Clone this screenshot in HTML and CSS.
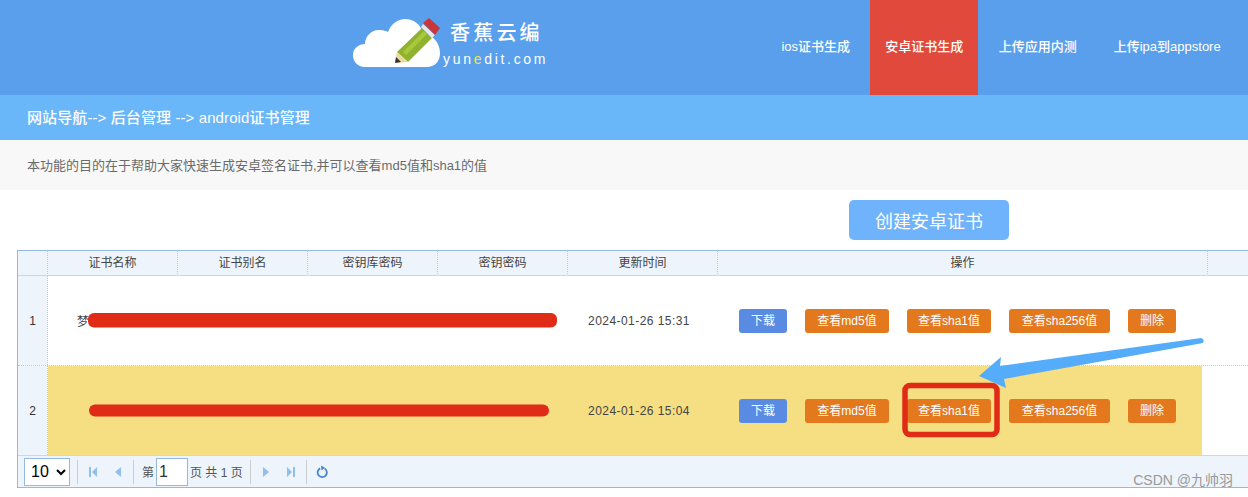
FILE: index.html
```html
<!DOCTYPE html>
<html lang="zh">
<head>
<meta charset="utf-8">
<title>android证书管理</title>
<link rel="stylesheet" href="styles.css">
</head>
<body>
<header class="topbar">
  <div class="logo">
    <svg class="logo-mark" width="104" height="50" viewBox="0 0 104 50">
      <path d="M12 50C4 50 0 44 0 38C0 31 6 27 12 27C12 18 20 12 27 13C31 13 33 14 35 15C38 7 45 2 52 2C61 2 68 8 70 16C80 18 87 26 87 36C87 45 81 50 74 50Z" fill="#fff"/>
      <path d="M44 35L69 11L79 21L55 45Z" fill="#8fb32f"/>
      <path d="M50 35L71 14L74 17L53 38Z" fill="#a9c83e"/>
      <path d="M42 46L44 35L55 45Z" fill="#ecd9a0"/>
      <path d="M42 46L43 40L48 45Z" fill="#333"/>
      <path d="M68 10L70 7L82 18L79 21Z" fill="#e8e8e8"/>
      <path d="M70 6L76 1L87 11L82 18Z" fill="#c9373a"/>
    </svg>
    <div class="logo-text">
      <span class="logo-cn">香蕉云编</span>
      <span class="logo-en">yun<b class="logo-e">e</b>dit.com</span>
    </div>
  </div>
  <nav class="nav">
    <a class="nav-item nav-ios">ios证书生成</a>
    <a class="nav-item nav-active">安卓证书生成</a>
    <a class="nav-item nav-upload">上传应用内测</a>
    <a class="nav-item nav-store">上传ipa到appstore</a>
  </nav>
</header>
<div class="crumb">网站导航--&gt; 后台管理 --&gt; android证书管理</div>
<div class="desc">本功能的目的在于帮助大家快速生成安卓签名证书,并可以查看md5值和sha1的值</div>
<div class="actions"><button class="create">创建安卓证书</button></div>
<section class="grid">
  <div class="row head">
    <div class="cell num"></div>
    <div class="cell c-a">证书名称</div>
    <div class="cell c-a">证书别名</div>
    <div class="cell c-a">密钥库密码</div>
    <div class="cell c-a">密钥密码</div>
    <div class="cell c-t">更新时间</div>
    <div class="cell c-op">操作</div>
    <div class="cell c-rest"></div>
  </div>
  <div class="row body r1">
    <div class="cell num">1</div>
    <div class="cell c-a name">梦</div>
    <div class="cell c-a"></div>
    <div class="cell c-a"></div>
    <div class="cell c-a"></div>
    <div class="cell c-t date">2024-01-26 15:31</div>
    <div class="cell c-op ops">
      <a class="btn blue">下载</a><a class="btn orange w84">查看md5值</a><a class="btn orange w84">查看sha1值</a><a class="btn orange w100">查看sha256值</a><a class="btn orange w48">删除</a>
    </div>
  </div>
  <div class="row body r2">
    <div class="cell num">2</div>
    <div class="cell c-a hl"></div>
    <div class="cell c-a hl"></div>
    <div class="cell c-a hl"></div>
    <div class="cell c-a hl"></div>
    <div class="cell c-t hl date">2024-01-26 15:04</div>
    <div class="cell c-op ops hl op-short">
      <a class="btn blue">下载</a><a class="btn orange w84">查看md5值</a><a class="btn orange w84">查看sha1值</a><a class="btn orange w100">查看sha256值</a><a class="btn orange w48">删除</a>
    </div>
  </div>
  <div class="pager">
    <select class="size"><option>10</option></select>
    <i class="sep"></i>
    <svg class="pi" width="12" height="12" viewBox="0 0 12 12"><path d="M2 1h2v10H2zM10 1v10L5 6z" fill="#90bdee"/></svg>
    <svg class="pi" width="12" height="12" viewBox="0 0 12 12"><path d="M9 1v10L3 6z" fill="#90bdee"/></svg>
    <i class="sep sep-t"></i>
    <span class="p-t">第</span><span class="page-in">1</span><span class="p-t p-after">页 共 1 页</span>
    <i class="sep"></i>
    <svg class="pi" width="12" height="12" viewBox="0 0 12 12"><path d="M3 1v10L9 6z" fill="#90bdee"/></svg>
    <svg class="pi" width="12" height="12" viewBox="0 0 12 12"><path d="M10 1h-2v10h2zM2 1v10L7 6z" fill="#90bdee"/></svg>
    <i class="sep"></i>
    <svg class="pi" width="12" height="14" viewBox="0 0 12 14"><path d="M4.2 3.4A4.6 4.6 0 1 0 8.600 3.600" fill="none" stroke="#4a86cf" stroke-width="1.800"/><path d="M5 0.500L9 2.800L5.500 5.500Z" fill="#4a86cf"/></svg>
  </div>
</section>
<svg class="marks" width="1248" height="497" viewBox="0 0 1248 497">
  <rect x="88" y="313" width="469" height="14.500" rx="6" fill="#e02b17"/>
  <rect x="89" y="404.500" width="460" height="12" rx="6" fill="#e02b17"/>
  <rect x="905" y="385.500" width="92" height="49" rx="5" fill="none" stroke="#e02b17" stroke-width="5.500"/>
  <path d="M979 376L1001 357L1000 366L1201 338Q1205 339 1203 343L1004 379L1006 388Z" fill="#55acfb"/>
</svg>
<div class="wm">CSDN @九帅羽</div>
</body>
</html>
```
FILE: styles.css
```css
* { box-sizing: border-box; }
html, body { margin: 0; padding: 0; }
body {
  width: 1248px;
  height: 497px;
  overflow: hidden;
  position: relative;
  background: #fff;
  font-family: "Liberation Sans", "Noto Sans CJK SC", sans-serif;
  color: #444;
}
.topbar {
  height: 95px;
  background: #5a9fec;
  display: flex;
  padding-left: 353px;
}
.logo { display: flex; padding-top: 17px; height: 95px; }
.logo-mark { display: block; flex: none; }
.logo-text { display: flex; flex-direction: column; margin-left: -14px; color: #fff; font-weight: 500; }
.logo-cn { font-size: 20px; line-height: 30px; letter-spacing: 3.200px; margin-left: 7px; margin-top: 1px; }
.logo-en { font-size: 14px; line-height: 20px; letter-spacing: 2.700px; margin-top: 1px; }
.logo-e { color: #f3e34a; font-weight: normal; }
.nav { display: flex; margin-left: 219px; }
.nav-item {
  display: flex;
  align-items: center;
  justify-content: center;
  height: 95px;
  padding-bottom: 4px;
  color: #fff;
  font-size: 13px;
  font-weight: 500;
  white-space: nowrap;
}
.nav-ios { width: 103px; padding-right: 6px; }
.nav-active { width: 108px; background: #e2493d; }
.nav-upload { width: 113px; padding-left: 6px; }
.nav-store { width: 152px; }
.crumb {
  height: 45px;
  background: #69b6f8;
  color: #fff;
  font-size: 15px;
  font-weight: 500;
  letter-spacing: 0.100px;
  line-height: 45px;
  padding-left: 27px;
}
.desc {
  height: 50px;
  background: #f8f8f8;
  color: #6b6b6b;
  font-size: 13px;
  line-height: 51px;
  padding-left: 27px;
}
.actions { height: 60px; padding: 10px 0 0 849px; }
.create {
  display: block;
  width: 160px;
  height: 40px;
  border: 0;
  border-radius: 5px;
  background: #6fb3fd;
  color: #fff;
  font: 18px "Liberation Sans", "Noto Sans CJK SC", sans-serif;
  padding: 0;
}
.grid {
  margin-left: 17px;
  width: 1231px;
  height: 238px;
  border: 1px solid #95b8e7;
  border-right: 0;
  background: #fff;
  display: flex;
  flex-direction: column;
}
.row { display: flex; flex: none; }
.head {
  height: 25px;
  background: #edf4fb;
  border-bottom: 1px solid #d2d6da;
  font-size: 12px;
  line-height: 24px;
  text-align: center;
  color: #444;
}
.cell { flex: none; text-align: center; }
.head .cell { border-right: 1px dotted #c3c9cf; height: 23px; }
.num { width: 30px; background: #edf4fb; font-size: 12px; color: #333; border-right: 1px dotted #c3c9cf; }
.head .num { background: none; }
.c-a { width: 130px; }
.c-t { width: 150px; }
.c-op { width: 490px; }
.op-short { width: 484px; }
.head .c-rest { width: 40px; border-right: 0; }
.body { font-size: 12px; color: #444; align-items: stretch; }
.body .cell { display: flex; align-items: center; justify-content: center; }
.date { letter-spacing: 0.450px; white-space: nowrap; padding-right: 8px; }
.r1 { height: 90px; border-bottom: 1px dotted #c3c9cf; }
.r2 { height: 90px; border-bottom: 1px solid #d2d6da; }
.hl { background: #f6de82; }
.name { justify-content: flex-start !important; padding-left: 29px; }
.body .ops { justify-content: flex-start; padding: 0 0 0 21px; gap: 18px; letter-spacing: 0; }
.btn {
  display: block;
  height: 24px;
  border-radius: 3px;
  color: #fff;
  font-size: 12px;
  line-height: 24px;
  text-align: center;
  flex: none;
  width: 48px;
}
.blue { background: #5a8be3; }
.orange { background: #e4781d; }
.w84 { width: 84px; margin-right: -1px; }
.w84 + .w84 { margin-right: 0; margin-left: 1px; }
.w100 { width: 101px; }
.w48 { width: 48px; }
.pager {
  height: 31px;
  background: #edf4fb;
  display: flex;
  align-items: center;
  padding-left: 6px;
  font-size: 12px;
  color: #555;
}
.size {
  width: 46px;
  height: 28px;
  font: 16px "Liberation Sans", sans-serif;
  border: 1px solid #95b8e7;
  background: #fff;
  color: #000;
  padding: 0 0 0 2px;
  margin-right: 7px;
  border-radius: 0;
}
.sep { width: 1px; height: 24px; background: #ccc; flex: none; margin-right: 9px; }
.sep-t { margin-right: 8px; }
.pi { display: block; flex: none; margin-right: 9px; }
.pi + .pi { margin-left: 4px; }
.p-t { white-space: nowrap; }
.page-in {
  width: 32px;
  height: 28px;
  border: 1px solid #95b8e7;
  background: #fff;
  font-size: 16px;
  line-height: 26px;
  padding-left: 2px;
  color: #333;
  margin-left: 2px;
}
.p-after { margin: 0 7px 0 2px; }
.marks { position: absolute; left: 0; top: 0; pointer-events: none; }
.wm { position: absolute; right: 15px; top: 471px; font-size: 14px; line-height: 18px; color: #999; }
```
